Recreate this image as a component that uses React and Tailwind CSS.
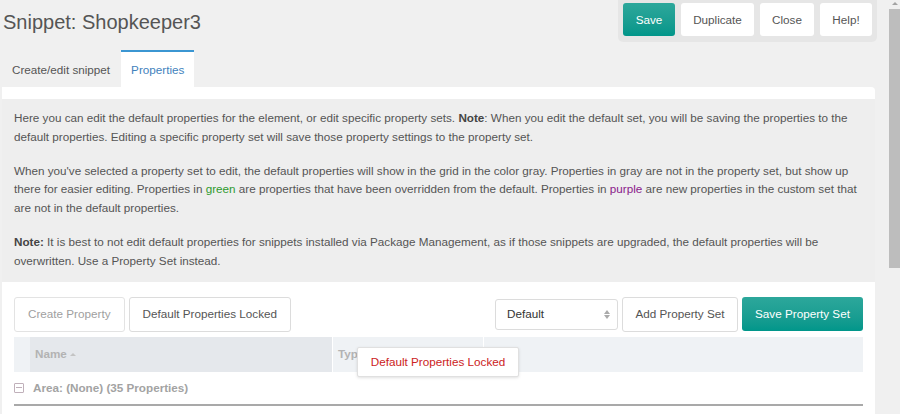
export default function App() {
  return (
    <div className="w-[900px] h-[414px] overflow-hidden flex bg-[#f0f0f0] font-['Liberation_Sans',Arial,sans-serif] text-[11.7px] text-[#555]">
      {/* Main column */}
      <div className="flex-1 flex flex-col pl-[2px] pr-[12px] min-w-0">
        {/* Header */}
        <div className="h-[50px] flex justify-between items-start shrink-0">
          <h1 className="mt-[11px] ml-[1px] text-[20px] leading-[23px] text-[#555] font-normal">
            Snippet: Shopkeeper3
          </h1>
          <div className="-mr-[2px] flex gap-[6px] px-[5px] pt-[3px] pb-[6px] bg-[#e6e6e6] rounded-b-[5px]">
            <button className="w-[52px] h-[33px] rounded-[3px] bg-linear-to-b from-[#2ca79b] to-[#00968a] text-white">
              Save
            </button>
            <button className="w-[73px] h-[33px] rounded-[3px] bg-white text-[#555]">Duplicate</button>
            <button className="w-[54px] h-[33px] rounded-[3px] bg-white text-[#555]">Close</button>
            <button className="w-[52px] h-[33px] rounded-[3px] bg-white text-[#555]">Help!</button>
          </div>
        </div>

        {/* Tabs */}
        <div className="h-[37px] flex items-stretch shrink-0">
          <div className="pl-[10px] pr-[11px] flex items-center pt-[3px] text-[#555]">Create/edit snippet</div>
          <div className="px-[10px] flex items-center border-t-2 border-[#3b96d2] bg-white text-[#3f82bd]">
            Properties
          </div>
        </div>

        {/* Panel */}
        <div className="flex-1 bg-white rounded-tr-[4px] pt-[12px]">
          {/* Info box */}
          <div className="bg-[#eeeeee] px-[12px] pt-[10px] pb-[11px] leading-[18.8px] flex flex-col gap-[15px] whitespace-nowrap">
            <p>
              Here you can edit the default properties for the element, or edit specific property sets.{' '}
              <b className="text-[#444]">Note</b>: When you edit the default set, you will be saving the properties to the
              <br />
              default properties. Editing a specific property set will save those property settings to the property set.
            </p>
            <p>
              When you've selected a property set to edit, the default properties will show in the grid in the color gray.
              Properties in gray are not in the property set, but show up
              <br />
              there for easier editing. Properties in <span className="text-[#2e9a2e]">green</span> are properties that have
              been overridden from the default. Properties in <span className="text-[#8b1a8b]">purple</span> are new
              properties in the custom set that
              <br />
              are not in the default properties.
            </p>
            <p>
              <b className="text-[#444]">Note:</b> It is best to not edit default properties for snippets installed via
              Package Management, as if those snippets are upgraded, the default properties will be
              <br />
              overwritten. Use a Property Set instead.
            </p>
          </div>

          {/* Grid area */}
          <div className="px-[12px] pt-[15px]">
            {/* Toolbar */}
            <div className="flex items-center justify-between h-[35px]">
              <div className="flex gap-[4px] h-full">
                <button className="px-[13px] h-full rounded-[3px] border border-[#e3e3e3] bg-white text-[#a0a0a0]">
                  Create Property
                </button>
                <button className="px-[13px] h-full rounded-[3px] border border-[#dcdcdc] bg-white text-[#555]">
                  Default Properties Locked
                </button>
              </div>
              <div className="flex gap-[4px] h-full items-center">
                <div className="w-[123px] h-[31px] rounded-[3px] border border-[#dcdcdc] bg-white flex items-center justify-between pl-[11px] pr-[7px] text-[#333]">
                  <span>Default</span>
                  <span className="flex flex-col gap-[1px]">
                    <span className="border-l-[3px] border-r-[3px] border-b-[4px] border-l-transparent border-r-transparent border-b-[#aaa]" />
                    <span className="border-l-[3px] border-r-[3px] border-t-[4px] border-l-transparent border-r-transparent border-t-[#aaa]" />
                  </span>
                </div>
                <button className="w-[116px] h-[35px] rounded-[3px] border border-[#dcdcdc] bg-white text-[#555]">
                  Add Property Set
                </button>
                <button className="w-[121px] h-[34px] rounded-[3px] bg-linear-to-b from-[#2ca79b] to-[#00968a] text-white">
                  Save Property Set
                </button>
              </div>
            </div>

            {/* Grid header */}
            <div className="relative mt-[5px] h-[35px] flex bg-[#eff2f5]">
              <div className="w-[16px]" />
              <div className="w-[302px] bg-[#e5e8ec] flex items-center pl-[5px] font-bold text-[#b3b3b3]">
                Name
                <span className="ml-[3px] border-l-[3px] border-r-[3px] border-b-[3px] border-l-transparent border-r-transparent border-b-[#c4c4c4]" />
              </div>
              <div className="w-[1px] bg-white" />
              <div className="w-[150px] flex items-center pl-[5px] font-bold text-[#b3b3b3]">Type</div>
              <div className="w-[1px] bg-white" />
              <div className="flex-1" />

              {/* Tooltip */}
              <div className="absolute left-[343px] top-[10px] w-[162px] h-[30px] bg-white border border-[#e0e0e0] rounded-[2px] shadow-[0_1px_3px_rgba(0,0,0,0.12)] flex items-center justify-center text-[#cc2222]">
                Default Properties Locked
              </div>
            </div>

            {/* Group row */}
            <div className="h-[34px] flex items-center border-b-2 border-[#a9a9a9]">
              <span className="w-[10px] h-[10px] border border-[#c0b0ba] rounded-[1px] flex items-center justify-center">
                <span className="w-[6px] h-[1px] bg-[#c0b0ba]" />
              </span>
              <span className="ml-[9px] font-bold text-[#a3a3a3]">Area: (None) (35 Properties)</span>
            </div>
          </div>
        </div>
      </div>

      {/* Scrollbar */}
      <div className="w-[13px] shrink-0 flex flex-col items-center bg-[#f0f0f0]">
        <span className="mt-[2px] ml-[2px] border-l-[3px] border-r-[3px] border-b-[3px] border-l-transparent border-r-transparent border-b-[#a3a3a3]" />
        <div className="mt-[4px] ml-[2px] w-[11px] h-[259px] bg-[#bdbdbd]" />
      </div>
    </div>
  );
}
